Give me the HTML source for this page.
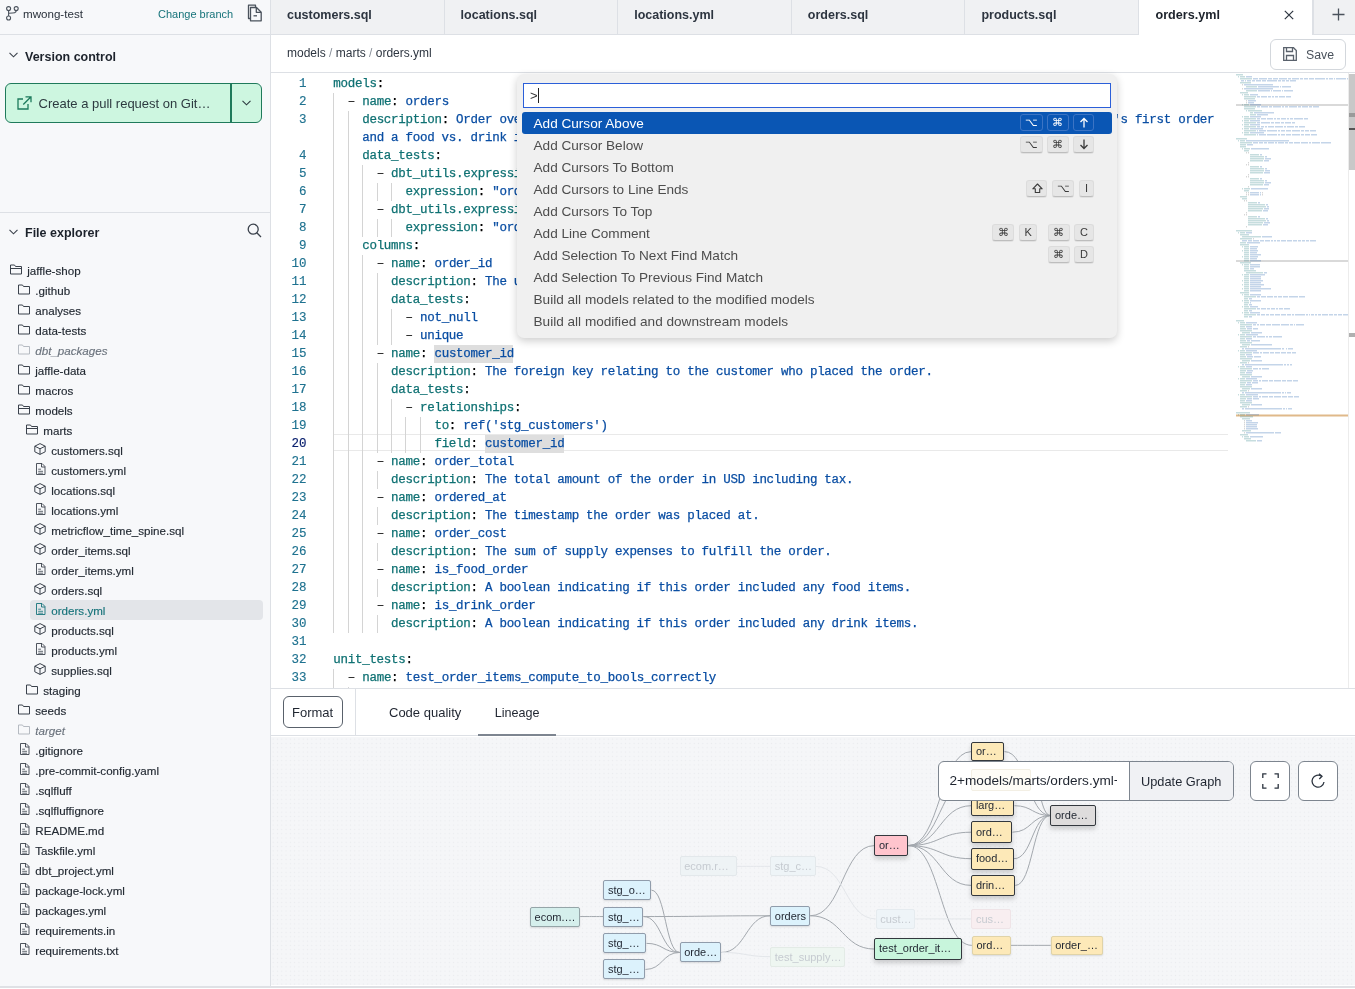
<!DOCTYPE html>
<html><head><meta charset="utf-8">
<style>
*{box-sizing:border-box;margin:0;padding:0}
body{will-change:transform}
html,body{width:1355px;height:989px;overflow:hidden;background:#fff;font-family:"Liberation Sans",sans-serif;color:#1f2530}
.abs{position:absolute}
#side{position:absolute;left:0;top:0;width:271px;height:989px;background:#f7f8fa;border-right:1px solid #dde0e5}
.hline{position:absolute;height:1px;background:#dde0e5}
.vline{position:absolute;width:1px;background:#dde0e5}
.t{position:absolute;white-space:nowrap;line-height:1.15}
.tr{-webkit-text-stroke:0.15px currentColor}
.tab{position:absolute;top:0;height:35px;background:#f0f1f3;border-right:1px solid #dde0e5;border-bottom:1px solid #dde0e5;font-weight:bold;font-size:12.5px;color:#2d3540}
.tab span{position:absolute;left:16px;top:8px}
.ln{-webkit-text-stroke:0.15px currentColor;position:absolute;width:36px;text-align:right;font-family:"Liberation Mono",monospace;font-size:12.5px;color:#1f7290;line-height:18px;height:18px}
.cl{-webkit-text-stroke:0.25px currentColor;position:absolute;font-family:"Liberation Mono",monospace;font-size:12.5px;letter-spacing:-0.28px;white-space:pre;color:#000;line-height:18px;height:18px}
.d{color:#222}.k{color:#0f7173}.v{color:#0a4ea3}
.g{position:absolute;width:1px;background:#d4d4d4}
.pi{position:absolute;font-size:13.6px;color:#4d4d4d;white-space:nowrap;line-height:22px}
.kb{position:absolute;height:17px;background:#e6e6e6;border:1px solid #dcdcdc;border-bottom-color:#bdbdbd;border-radius:3px;font-size:11px;color:#3a3a3a;text-align:center;line-height:15px;box-shadow:0 1px 0 rgba(0,0,0,.06)}
.sel .kb, .kbs{background:#0a56b4;border-color:#3c74c4;color:#fff;box-shadow:none}
.node{position:absolute;height:21px;border:1px solid #7d8793;border-radius:2px;font-size:11px;color:#1f2530;line-height:19px;padding-left:3.6px;white-space:nowrap;overflow:hidden;box-shadow:0 1px 2px rgba(0,0,0,.12)}
.dk{box-shadow:0 3px 5px rgba(0,0,0,.18)}
.fade{border-color:#e4e8ec;color:#c6cbd1;box-shadow:none}

</style></head>
<body>
<div id="side"></div>
<svg class="abs" style="left:5.5px;top:5.5px" width="13" height="15" viewBox="0 0 13 15" fill="none" stroke="#4a525c" stroke-width="1.1">
<circle cx="2.6" cy="2.6" r="2"/><circle cx="10.2" cy="2.6" r="2"/><circle cx="2.6" cy="12" r="2"/>
<path d="M2.6 4.6V10M10.2 4.6C10.2 7 8.5 7.2 2.8 7.3"/></svg>
<div class="t" style="left:23px;top:7px;font-size:11.6px;color:#2a313b">mwong-test</div>
<div class="t" style="left:158px;top:8px;font-size:11px;color:#16737a">Change branch</div>
<svg class="abs" style="left:246.5px;top:4px" width="16" height="18" viewBox="0 0 16 18" fill="none" stroke="#4a525c" stroke-width="1.3" stroke-linejoin="round">
<path d="M3.2 14.5H1.5V1.2H8.5V3"/><path d="M3.5 3.5H9.5L14.2 8.2V16.8H3.5Z"/><path d="M9.3 3.6V8.3H14"/><path d="M6.5 11.8H10"/></svg>
<div class="hline" style="left:0;top:34px;width:271px"></div>
<svg class="abs" style="left:9px;top:52px" width="9" height="6" viewBox="0 0 9 6" fill="none" stroke="#3b424c" stroke-width="1.1"><path d="M0.5 0.8L4.5 4.8L8.5 0.8"/></svg>
<div class="t" style="left:25px;top:49.5px;font-size:12.5px;font-weight:bold;color:#1c222b">Version control</div>
<div class="abs" style="left:5px;top:83px;width:257px;height:40px;background:#cdf6e0;border:1.5px solid #1f7a5b;border-radius:6px"></div>
<div class="abs" style="left:230px;top:84px;width:1.5px;height:38px;background:#1f7a5b"></div>
<svg class="abs" style="left:16.8px;top:95.8px" width="15" height="14" viewBox="0 0 15 14" fill="none" stroke="#1c7a5c" stroke-width="1.3">
<path d="M6 3H1V13H11V8"/><path d="M8.5 0.8H14V6.3M14 0.8L6.3 8.5"/></svg>
<div class="t" style="left:38.5px;top:97px;font-size:13px;color:#2d3a40">Create a pull request on Git…</div>
<svg class="abs" style="left:242px;top:100px" width="9" height="6" viewBox="0 0 9 6" fill="none" stroke="#2d3a40" stroke-width="1.1"><path d="M0.5 0.8L4.5 4.8L8.5 0.8"/></svg>
<div class="hline" style="left:0;top:212px;width:271px"></div>
<svg class="abs" style="left:9px;top:229px" width="9" height="6" viewBox="0 0 9 6" fill="none" stroke="#3b424c" stroke-width="1.1"><path d="M0.5 0.8L4.5 4.8L8.5 0.8"/></svg>
<div class="t" style="left:25px;top:225.7px;font-size:12.5px;font-weight:bold;color:#1c222b">File explorer</div>
<svg class="abs" style="left:247px;top:223px" width="15" height="15" viewBox="0 0 15 15" fill="none" stroke="#3b424c" stroke-width="1.3">
<circle cx="6.2" cy="6.2" r="5"/><path d="M9.8 9.8L14 14"/></svg>
<svg class="abs" style="left:10px;top:264px" width="12" height="11" viewBox="0 0 12 11" fill="none" stroke="#3b424c" stroke-width="1"><path d="M0.5 1V10H11.5V2.5H5.5L4.5 1Z"/><path d="M0.5 4.5H11.5"/></svg>
<div class="t tr" style="left:27.3px;top:263.7px;font-size:11.6px;color:#232a33;">jaffle-shop</div>
<svg class="abs" style="left:18px;top:284px" width="12" height="11" viewBox="0 0 12 11" fill="none" stroke="#3b424c" stroke-width="1"><path d="M0.5 1V10H11.5V2.5H5.5L4.5 1Z"/></svg>
<div class="t tr" style="left:35.3px;top:283.7px;font-size:11.6px;color:#232a33;">.github</div>
<svg class="abs" style="left:18px;top:304px" width="12" height="11" viewBox="0 0 12 11" fill="none" stroke="#3b424c" stroke-width="1"><path d="M0.5 1V10H11.5V2.5H5.5L4.5 1Z"/></svg>
<div class="t tr" style="left:35.3px;top:303.7px;font-size:11.6px;color:#232a33;">analyses</div>
<svg class="abs" style="left:18px;top:324px" width="12" height="11" viewBox="0 0 12 11" fill="none" stroke="#3b424c" stroke-width="1"><path d="M0.5 1V10H11.5V2.5H5.5L4.5 1Z"/></svg>
<div class="t tr" style="left:35.3px;top:323.7px;font-size:11.6px;color:#232a33;">data-tests</div>
<svg class="abs" style="left:18px;top:344px" width="12" height="11" viewBox="0 0 12 11" fill="none" stroke="#b5bac1" stroke-width="1"><path d="M0.5 1V10H11.5V2.5H5.5L4.5 1Z"/></svg>
<div class="t tr" style="left:35.3px;top:343.7px;font-size:11.6px;color:#6b737d;font-style:italic;">dbt_packages</div>
<svg class="abs" style="left:18px;top:364px" width="12" height="11" viewBox="0 0 12 11" fill="none" stroke="#3b424c" stroke-width="1"><path d="M0.5 1V10H11.5V2.5H5.5L4.5 1Z"/></svg>
<div class="t tr" style="left:35.3px;top:363.7px;font-size:11.6px;color:#232a33;">jaffle-data</div>
<svg class="abs" style="left:18px;top:384px" width="12" height="11" viewBox="0 0 12 11" fill="none" stroke="#3b424c" stroke-width="1"><path d="M0.5 1V10H11.5V2.5H5.5L4.5 1Z"/></svg>
<div class="t tr" style="left:35.3px;top:383.7px;font-size:11.6px;color:#232a33;">macros</div>
<svg class="abs" style="left:18px;top:404px" width="12" height="11" viewBox="0 0 12 11" fill="none" stroke="#3b424c" stroke-width="1"><path d="M0.5 1V10H11.5V2.5H5.5L4.5 1Z"/><path d="M0.5 4.5H11.5"/></svg>
<div class="t tr" style="left:35.3px;top:403.7px;font-size:11.6px;color:#232a33;">models</div>
<svg class="abs" style="left:26px;top:424px" width="12" height="11" viewBox="0 0 12 11" fill="none" stroke="#3b424c" stroke-width="1"><path d="M0.5 1V10H11.5V2.5H5.5L4.5 1Z"/><path d="M0.5 4.5H11.5"/></svg>
<div class="t tr" style="left:43.3px;top:423.7px;font-size:11.6px;color:#232a33;">marts</div>
<svg class="abs" style="left:34px;top:443px" width="12" height="12" viewBox="0 0 12 12" fill="none" stroke="#3b424c" stroke-width="1"><path d="M6 0.6L11.2 3.2V8.8L6 11.4L0.8 8.8V3.2Z"/><path d="M0.8 3.2L6 5.8L11.2 3.2M6 5.8V11.4"/></svg>
<div class="t tr" style="left:51.3px;top:443.7px;font-size:11.6px;color:#232a33;">customers.sql</div>
<svg class="abs" style="left:35.5px;top:463px" width="10" height="12" viewBox="0 0 10 12" fill="none" stroke="#3b424c" stroke-width="0.9"><path d="M0.5 0.5H6L9 3.5V11.5H0.5Z"/><path d="M5.5 0.5V4H9"/><path d="M2.2 6.2H5M2.2 8.3H7M2.2 10.2H7" stroke-width="0.8"/></svg>
<div class="t tr" style="left:51.3px;top:463.7px;font-size:11.6px;color:#232a33;">customers.yml</div>
<svg class="abs" style="left:34px;top:483px" width="12" height="12" viewBox="0 0 12 12" fill="none" stroke="#3b424c" stroke-width="1"><path d="M6 0.6L11.2 3.2V8.8L6 11.4L0.8 8.8V3.2Z"/><path d="M0.8 3.2L6 5.8L11.2 3.2M6 5.8V11.4"/></svg>
<div class="t tr" style="left:51.3px;top:483.7px;font-size:11.6px;color:#232a33;">locations.sql</div>
<svg class="abs" style="left:35.5px;top:503px" width="10" height="12" viewBox="0 0 10 12" fill="none" stroke="#3b424c" stroke-width="0.9"><path d="M0.5 0.5H6L9 3.5V11.5H0.5Z"/><path d="M5.5 0.5V4H9"/><path d="M2.2 6.2H5M2.2 8.3H7M2.2 10.2H7" stroke-width="0.8"/></svg>
<div class="t tr" style="left:51.3px;top:503.7px;font-size:11.6px;color:#232a33;">locations.yml</div>
<svg class="abs" style="left:34px;top:523px" width="12" height="12" viewBox="0 0 12 12" fill="none" stroke="#3b424c" stroke-width="1"><path d="M6 0.6L11.2 3.2V8.8L6 11.4L0.8 8.8V3.2Z"/><path d="M0.8 3.2L6 5.8L11.2 3.2M6 5.8V11.4"/></svg>
<div class="t tr" style="left:51.3px;top:523.7px;font-size:11.6px;color:#232a33;">metricflow_time_spine.sql</div>
<svg class="abs" style="left:34px;top:543px" width="12" height="12" viewBox="0 0 12 12" fill="none" stroke="#3b424c" stroke-width="1"><path d="M6 0.6L11.2 3.2V8.8L6 11.4L0.8 8.8V3.2Z"/><path d="M0.8 3.2L6 5.8L11.2 3.2M6 5.8V11.4"/></svg>
<div class="t tr" style="left:51.3px;top:543.7px;font-size:11.6px;color:#232a33;">order_items.sql</div>
<svg class="abs" style="left:35.5px;top:563px" width="10" height="12" viewBox="0 0 10 12" fill="none" stroke="#3b424c" stroke-width="0.9"><path d="M0.5 0.5H6L9 3.5V11.5H0.5Z"/><path d="M5.5 0.5V4H9"/><path d="M2.2 6.2H5M2.2 8.3H7M2.2 10.2H7" stroke-width="0.8"/></svg>
<div class="t tr" style="left:51.3px;top:563.7px;font-size:11.6px;color:#232a33;">order_items.yml</div>
<svg class="abs" style="left:34px;top:583px" width="12" height="12" viewBox="0 0 12 12" fill="none" stroke="#3b424c" stroke-width="1"><path d="M6 0.6L11.2 3.2V8.8L6 11.4L0.8 8.8V3.2Z"/><path d="M0.8 3.2L6 5.8L11.2 3.2M6 5.8V11.4"/></svg>
<div class="t tr" style="left:51.3px;top:583.7px;font-size:11.6px;color:#232a33;">orders.sql</div>
<div class="abs" style="left:29.5px;top:600px;width:233px;height:20px;background:#e3e5e9;border-radius:4px"></div>
<svg class="abs" style="left:35.5px;top:603px" width="10" height="12" viewBox="0 0 10 12" fill="none" stroke="#16737a" stroke-width="0.9"><path d="M0.5 0.5H6L9 3.5V11.5H0.5Z"/><path d="M5.5 0.5V4H9"/><path d="M2.2 6.2H5M2.2 8.3H7M2.2 10.2H7" stroke-width="0.8"/></svg>
<div class="t tr" style="left:51.3px;top:603.7px;font-size:11.6px;color:#16737a;">orders.yml</div>
<svg class="abs" style="left:34px;top:623px" width="12" height="12" viewBox="0 0 12 12" fill="none" stroke="#3b424c" stroke-width="1"><path d="M6 0.6L11.2 3.2V8.8L6 11.4L0.8 8.8V3.2Z"/><path d="M0.8 3.2L6 5.8L11.2 3.2M6 5.8V11.4"/></svg>
<div class="t tr" style="left:51.3px;top:623.7px;font-size:11.6px;color:#232a33;">products.sql</div>
<svg class="abs" style="left:35.5px;top:643px" width="10" height="12" viewBox="0 0 10 12" fill="none" stroke="#3b424c" stroke-width="0.9"><path d="M0.5 0.5H6L9 3.5V11.5H0.5Z"/><path d="M5.5 0.5V4H9"/><path d="M2.2 6.2H5M2.2 8.3H7M2.2 10.2H7" stroke-width="0.8"/></svg>
<div class="t tr" style="left:51.3px;top:643.7px;font-size:11.6px;color:#232a33;">products.yml</div>
<svg class="abs" style="left:34px;top:663px" width="12" height="12" viewBox="0 0 12 12" fill="none" stroke="#3b424c" stroke-width="1"><path d="M6 0.6L11.2 3.2V8.8L6 11.4L0.8 8.8V3.2Z"/><path d="M0.8 3.2L6 5.8L11.2 3.2M6 5.8V11.4"/></svg>
<div class="t tr" style="left:51.3px;top:663.7px;font-size:11.6px;color:#232a33;">supplies.sql</div>
<svg class="abs" style="left:26px;top:684px" width="12" height="11" viewBox="0 0 12 11" fill="none" stroke="#3b424c" stroke-width="1"><path d="M0.5 1V10H11.5V2.5H5.5L4.5 1Z"/></svg>
<div class="t tr" style="left:43.3px;top:683.7px;font-size:11.6px;color:#232a33;">staging</div>
<svg class="abs" style="left:18px;top:704px" width="12" height="11" viewBox="0 0 12 11" fill="none" stroke="#3b424c" stroke-width="1"><path d="M0.5 1V10H11.5V2.5H5.5L4.5 1Z"/></svg>
<div class="t tr" style="left:35.3px;top:703.7px;font-size:11.6px;color:#232a33;">seeds</div>
<svg class="abs" style="left:18px;top:724px" width="12" height="11" viewBox="0 0 12 11" fill="none" stroke="#b5bac1" stroke-width="1"><path d="M0.5 1V10H11.5V2.5H5.5L4.5 1Z"/></svg>
<div class="t tr" style="left:35.3px;top:723.7px;font-size:11.6px;color:#6b737d;font-style:italic;">target</div>
<svg class="abs" style="left:19.5px;top:743px" width="10" height="12" viewBox="0 0 10 12" fill="none" stroke="#3b424c" stroke-width="0.9"><path d="M0.5 0.5H6L9 3.5V11.5H0.5Z"/><path d="M5.5 0.5V4H9"/><path d="M2.2 6.2H5M2.2 8.3H7M2.2 10.2H7" stroke-width="0.8"/></svg>
<div class="t tr" style="left:35.3px;top:743.7px;font-size:11.6px;color:#232a33;">.gitignore</div>
<svg class="abs" style="left:19.5px;top:763px" width="10" height="12" viewBox="0 0 10 12" fill="none" stroke="#3b424c" stroke-width="0.9"><path d="M0.5 0.5H6L9 3.5V11.5H0.5Z"/><path d="M5.5 0.5V4H9"/><path d="M2.2 6.2H5M2.2 8.3H7M2.2 10.2H7" stroke-width="0.8"/></svg>
<div class="t tr" style="left:35.3px;top:763.7px;font-size:11.6px;color:#232a33;">.pre-commit-config.yaml</div>
<svg class="abs" style="left:19.5px;top:783px" width="10" height="12" viewBox="0 0 10 12" fill="none" stroke="#3b424c" stroke-width="0.9"><path d="M0.5 0.5H6L9 3.5V11.5H0.5Z"/><path d="M5.5 0.5V4H9"/><path d="M2.2 6.2H5M2.2 8.3H7M2.2 10.2H7" stroke-width="0.8"/></svg>
<div class="t tr" style="left:35.3px;top:783.7px;font-size:11.6px;color:#232a33;">.sqlfluff</div>
<svg class="abs" style="left:19.5px;top:803px" width="10" height="12" viewBox="0 0 10 12" fill="none" stroke="#3b424c" stroke-width="0.9"><path d="M0.5 0.5H6L9 3.5V11.5H0.5Z"/><path d="M5.5 0.5V4H9"/><path d="M2.2 6.2H5M2.2 8.3H7M2.2 10.2H7" stroke-width="0.8"/></svg>
<div class="t tr" style="left:35.3px;top:803.7px;font-size:11.6px;color:#232a33;">.sqlfluffignore</div>
<svg class="abs" style="left:19.5px;top:823px" width="10" height="12" viewBox="0 0 10 12" fill="none" stroke="#3b424c" stroke-width="0.9"><path d="M0.5 0.5H6L9 3.5V11.5H0.5Z"/><path d="M5.5 0.5V4H9"/><path d="M2.2 6.2H5M2.2 8.3H7M2.2 10.2H7" stroke-width="0.8"/></svg>
<div class="t tr" style="left:35.3px;top:823.7px;font-size:11.6px;color:#232a33;">README.md</div>
<svg class="abs" style="left:19.5px;top:843px" width="10" height="12" viewBox="0 0 10 12" fill="none" stroke="#3b424c" stroke-width="0.9"><path d="M0.5 0.5H6L9 3.5V11.5H0.5Z"/><path d="M5.5 0.5V4H9"/><path d="M2.2 6.2H5M2.2 8.3H7M2.2 10.2H7" stroke-width="0.8"/></svg>
<div class="t tr" style="left:35.3px;top:843.7px;font-size:11.6px;color:#232a33;">Taskfile.yml</div>
<svg class="abs" style="left:19.5px;top:863px" width="10" height="12" viewBox="0 0 10 12" fill="none" stroke="#3b424c" stroke-width="0.9"><path d="M0.5 0.5H6L9 3.5V11.5H0.5Z"/><path d="M5.5 0.5V4H9"/><path d="M2.2 6.2H5M2.2 8.3H7M2.2 10.2H7" stroke-width="0.8"/></svg>
<div class="t tr" style="left:35.3px;top:863.7px;font-size:11.6px;color:#232a33;">dbt_project.yml</div>
<svg class="abs" style="left:19.5px;top:883px" width="10" height="12" viewBox="0 0 10 12" fill="none" stroke="#3b424c" stroke-width="0.9"><path d="M0.5 0.5H6L9 3.5V11.5H0.5Z"/><path d="M5.5 0.5V4H9"/><path d="M2.2 6.2H5M2.2 8.3H7M2.2 10.2H7" stroke-width="0.8"/></svg>
<div class="t tr" style="left:35.3px;top:883.7px;font-size:11.6px;color:#232a33;">package-lock.yml</div>
<svg class="abs" style="left:19.5px;top:903px" width="10" height="12" viewBox="0 0 10 12" fill="none" stroke="#3b424c" stroke-width="0.9"><path d="M0.5 0.5H6L9 3.5V11.5H0.5Z"/><path d="M5.5 0.5V4H9"/><path d="M2.2 6.2H5M2.2 8.3H7M2.2 10.2H7" stroke-width="0.8"/></svg>
<div class="t tr" style="left:35.3px;top:903.7px;font-size:11.6px;color:#232a33;">packages.yml</div>
<svg class="abs" style="left:19.5px;top:923px" width="10" height="12" viewBox="0 0 10 12" fill="none" stroke="#3b424c" stroke-width="0.9"><path d="M0.5 0.5H6L9 3.5V11.5H0.5Z"/><path d="M5.5 0.5V4H9"/><path d="M2.2 6.2H5M2.2 8.3H7M2.2 10.2H7" stroke-width="0.8"/></svg>
<div class="t tr" style="left:35.3px;top:923.7px;font-size:11.6px;color:#232a33;">requirements.in</div>
<svg class="abs" style="left:19.5px;top:943px" width="10" height="12" viewBox="0 0 10 12" fill="none" stroke="#3b424c" stroke-width="0.9"><path d="M0.5 0.5H6L9 3.5V11.5H0.5Z"/><path d="M5.5 0.5V4H9"/><path d="M2.2 6.2H5M2.2 8.3H7M2.2 10.2H7" stroke-width="0.8"/></svg>
<div class="t tr" style="left:35.3px;top:943.7px;font-size:11.6px;color:#232a33;">requirements.txt</div>
<div class="abs" style="left:0;top:985.5px;width:1355px;height:3.5px;background:#fff;border-top:2px solid #dfe1e5"></div>
<div class="tab" style="left:271.0px;width:173.6px"><span>customers.sql</span></div>
<div class="tab" style="left:444.6px;width:173.6px"><span>locations.sql</span></div>
<div class="tab" style="left:618.2px;width:173.6px"><span>locations.yml</span></div>
<div class="tab" style="left:791.8px;width:173.6px"><span>orders.sql</span></div>
<div class="tab" style="left:965.4px;width:173.6px"><span>products.sql</span></div>
<div class="abs" style="left:1139px;top:0;width:174px;height:35px;background:#fff;border-right:1px solid #dde0e5"></div>
<div class="t" style="left:1155.5px;top:8px;font-size:12.6px;font-weight:bold;color:#1c222b">orders.yml</div>
<svg class="abs" style="left:1284px;top:9.5px" width="10" height="10" viewBox="0 0 10 10" fill="none" stroke="#2d3540" stroke-width="1.2"><path d="M0.8 0.8L9.2 9.2M9.2 0.8L0.8 9.2"/></svg>
<div class="abs" style="left:1313px;top:0;width:42px;height:35px;background:#f0f1f3;border-bottom:1px solid #dde0e5;border-left:1px solid #dde0e5"></div>
<svg class="abs" style="left:1332px;top:8px" width="13" height="13" viewBox="0 0 13 13" fill="none" stroke="#4a525c" stroke-width="1.3"><path d="M6.5 0.5V12.5M0.5 6.5H12.5"/></svg>
<div class="abs" style="left:271px;top:35px;width:1084px;height:38px;background:#fff;border-bottom:1px solid #dde0e5"></div>
<div class="t" style="left:287px;top:47px;font-size:12px;color:#2d3540">models <span style="color:#8a919a">/</span> marts <span style="color:#8a919a">/</span> orders.yml</div>
<div class="abs" style="left:1270px;top:38.5px;width:76px;height:31px;border:1px solid #d3d7dc;border-radius:6px;background:#fff"></div>
<svg class="abs" style="left:1283px;top:47px" width="14" height="14" viewBox="0 0 14 14" fill="none" stroke="#5a626c" stroke-width="1.3"><path d="M0.7 0.7H10.5L13.3 3.5V13.3H0.7Z"/><path d="M3.5 0.7V4.5H9.5V0.7"/><path d="M3.5 13.3V8.5H10.5V13.3"/></svg>
<div class="t" style="left:1306px;top:48px;font-size:12.3px;color:#4a525c">Save</div>
<div class="abs" style="left:271px;top:73px;width:1084px;height:615px;background:#fff"></div>
<div class="abs" style="left:333px;top:434.0px;width:895px;height:17px;border-top:1.5px solid #e9e9e9;border-bottom:1.5px solid #e9e9e9"></div>
<div class="abs" style="left:434.1px;top:344.5px;width:79.2px;height:18px;background:#dedede"></div>
<div class="abs" style="left:484.5px;top:434.5px;width:79.2px;height:18px;background:#dedede"></div>
<div class="ln" style="left:270.5px;top:74.5px;">1</div>
<div class="cl" style="left:333.3px;top:74.5px"><span class="k">models</span>:</div>
<div class="ln" style="left:270.5px;top:92.5px;">2</div>
<div class="g" style="left:333.3px;top:92.5px;height:18px"></div>
<div class="cl" style="left:333.3px;top:92.5px">  <span class="d">–</span> <span class="k">name</span>:<span class="v"> orders</span></div>
<div class="ln" style="left:270.5px;top:110.5px;">3</div>
<div class="g" style="left:333.3px;top:110.5px;height:18px"></div>
<div class="g" style="left:347.7px;top:110.5px;height:18px"></div>
<div class="cl" style="left:333.3px;top:110.5px">    <span class="k">description</span>:<span class="v"> Order overview data mart, offering key details for each order inlcluding if it&#x27;s a customer&#x27;s first order </span></div>
<div class="g" style="left:333.3px;top:128.5px;height:18px"></div>
<div class="g" style="left:347.7px;top:128.5px;height:18px"></div>
<div class="cl" style="left:333.3px;top:128.5px">    <span class="v">and a food vs. drink item breakdown. One row per order.</span></div>
<div class="ln" style="left:270.5px;top:146.5px;">4</div>
<div class="g" style="left:333.3px;top:146.5px;height:18px"></div>
<div class="g" style="left:347.7px;top:146.5px;height:18px"></div>
<div class="cl" style="left:333.3px;top:146.5px">    <span class="k">data_tests</span>:</div>
<div class="ln" style="left:270.5px;top:164.5px;">5</div>
<div class="g" style="left:333.3px;top:164.5px;height:18px"></div>
<div class="g" style="left:347.7px;top:164.5px;height:18px"></div>
<div class="g" style="left:362.1px;top:164.5px;height:18px"></div>
<div class="cl" style="left:333.3px;top:164.5px">      <span class="d">–</span> <span class="k">dbt_utils.expression_is_true</span>:</div>
<div class="ln" style="left:270.5px;top:182.5px;">6</div>
<div class="g" style="left:333.3px;top:182.5px;height:18px"></div>
<div class="g" style="left:347.7px;top:182.5px;height:18px"></div>
<div class="g" style="left:362.1px;top:182.5px;height:18px"></div>
<div class="g" style="left:376.5px;top:182.5px;height:18px"></div>
<div class="g" style="left:390.9px;top:182.5px;height:18px"></div>
<div class="cl" style="left:333.3px;top:182.5px">          <span class="k">expression</span>:<span class="v"> &quot;order_total - tax_paid = subtotal&quot;</span></div>
<div class="ln" style="left:270.5px;top:200.5px;">7</div>
<div class="g" style="left:333.3px;top:200.5px;height:18px"></div>
<div class="g" style="left:347.7px;top:200.5px;height:18px"></div>
<div class="g" style="left:362.1px;top:200.5px;height:18px"></div>
<div class="cl" style="left:333.3px;top:200.5px">      <span class="d">–</span> <span class="k">dbt_utils.expression_is_true</span>:</div>
<div class="ln" style="left:270.5px;top:218.5px;">8</div>
<div class="g" style="left:333.3px;top:218.5px;height:18px"></div>
<div class="g" style="left:347.7px;top:218.5px;height:18px"></div>
<div class="g" style="left:362.1px;top:218.5px;height:18px"></div>
<div class="g" style="left:376.5px;top:218.5px;height:18px"></div>
<div class="g" style="left:390.9px;top:218.5px;height:18px"></div>
<div class="cl" style="left:333.3px;top:218.5px">          <span class="k">expression</span>:<span class="v"> &quot;order_items_subtotal = subtotal&quot;</span></div>
<div class="ln" style="left:270.5px;top:236.5px;">9</div>
<div class="g" style="left:333.3px;top:236.5px;height:18px"></div>
<div class="g" style="left:347.7px;top:236.5px;height:18px"></div>
<div class="cl" style="left:333.3px;top:236.5px">    <span class="k">columns</span>:</div>
<div class="ln" style="left:270.5px;top:254.5px;">10</div>
<div class="g" style="left:333.3px;top:254.5px;height:18px"></div>
<div class="g" style="left:347.7px;top:254.5px;height:18px"></div>
<div class="g" style="left:362.1px;top:254.5px;height:18px"></div>
<div class="cl" style="left:333.3px;top:254.5px">      <span class="d">–</span> <span class="k">name</span>:<span class="v"> order_id</span></div>
<div class="ln" style="left:270.5px;top:272.5px;">11</div>
<div class="g" style="left:333.3px;top:272.5px;height:18px"></div>
<div class="g" style="left:347.7px;top:272.5px;height:18px"></div>
<div class="g" style="left:362.1px;top:272.5px;height:18px"></div>
<div class="g" style="left:376.5px;top:272.5px;height:18px"></div>
<div class="cl" style="left:333.3px;top:272.5px">        <span class="k">description</span>:<span class="v"> The unique key of the orders mart.</span></div>
<div class="ln" style="left:270.5px;top:290.5px;">12</div>
<div class="g" style="left:333.3px;top:290.5px;height:18px"></div>
<div class="g" style="left:347.7px;top:290.5px;height:18px"></div>
<div class="g" style="left:362.1px;top:290.5px;height:18px"></div>
<div class="g" style="left:376.5px;top:290.5px;height:18px"></div>
<div class="cl" style="left:333.3px;top:290.5px">        <span class="k">data_tests</span>:</div>
<div class="ln" style="left:270.5px;top:308.5px;">13</div>
<div class="g" style="left:333.3px;top:308.5px;height:18px"></div>
<div class="g" style="left:347.7px;top:308.5px;height:18px"></div>
<div class="g" style="left:362.1px;top:308.5px;height:18px"></div>
<div class="g" style="left:376.5px;top:308.5px;height:18px"></div>
<div class="g" style="left:390.9px;top:308.5px;height:18px"></div>
<div class="cl" style="left:333.3px;top:308.5px">          <span class="d">–</span> <span class="v">not_null</span></div>
<div class="ln" style="left:270.5px;top:326.5px;">14</div>
<div class="g" style="left:333.3px;top:326.5px;height:18px"></div>
<div class="g" style="left:347.7px;top:326.5px;height:18px"></div>
<div class="g" style="left:362.1px;top:326.5px;height:18px"></div>
<div class="g" style="left:376.5px;top:326.5px;height:18px"></div>
<div class="g" style="left:390.9px;top:326.5px;height:18px"></div>
<div class="cl" style="left:333.3px;top:326.5px">          <span class="d">–</span> <span class="v">unique</span></div>
<div class="ln" style="left:270.5px;top:344.5px;">15</div>
<div class="g" style="left:333.3px;top:344.5px;height:18px"></div>
<div class="g" style="left:347.7px;top:344.5px;height:18px"></div>
<div class="g" style="left:362.1px;top:344.5px;height:18px"></div>
<div class="cl" style="left:333.3px;top:344.5px">      <span class="d">–</span> <span class="k">name</span>:<span class="v"> customer_id</span></div>
<div class="ln" style="left:270.5px;top:362.5px;">16</div>
<div class="g" style="left:333.3px;top:362.5px;height:18px"></div>
<div class="g" style="left:347.7px;top:362.5px;height:18px"></div>
<div class="g" style="left:362.1px;top:362.5px;height:18px"></div>
<div class="g" style="left:376.5px;top:362.5px;height:18px"></div>
<div class="cl" style="left:333.3px;top:362.5px">        <span class="k">description</span>:<span class="v"> The foreign key relating to the customer who placed the order.</span></div>
<div class="ln" style="left:270.5px;top:380.5px;">17</div>
<div class="g" style="left:333.3px;top:380.5px;height:18px"></div>
<div class="g" style="left:347.7px;top:380.5px;height:18px"></div>
<div class="g" style="left:362.1px;top:380.5px;height:18px"></div>
<div class="g" style="left:376.5px;top:380.5px;height:18px"></div>
<div class="cl" style="left:333.3px;top:380.5px">        <span class="k">data_tests</span>:</div>
<div class="ln" style="left:270.5px;top:398.5px;">18</div>
<div class="g" style="left:333.3px;top:398.5px;height:18px"></div>
<div class="g" style="left:347.7px;top:398.5px;height:18px"></div>
<div class="g" style="left:362.1px;top:398.5px;height:18px"></div>
<div class="g" style="left:376.5px;top:398.5px;height:18px"></div>
<div class="g" style="left:390.9px;top:398.5px;height:18px"></div>
<div class="cl" style="left:333.3px;top:398.5px">          <span class="d">–</span> <span class="k">relationships</span>:</div>
<div class="ln" style="left:270.5px;top:416.5px;">19</div>
<div class="g" style="left:333.3px;top:416.5px;height:18px"></div>
<div class="g" style="left:347.7px;top:416.5px;height:18px"></div>
<div class="g" style="left:362.1px;top:416.5px;height:18px"></div>
<div class="g" style="left:376.5px;top:416.5px;height:18px"></div>
<div class="g" style="left:390.9px;top:416.5px;height:18px"></div>
<div class="g" style="left:405.3px;top:416.5px;height:18px"></div>
<div class="g" style="left:419.7px;top:416.5px;height:18px"></div>
<div class="cl" style="left:333.3px;top:416.5px">              <span class="k">to</span>:<span class="v"> ref(&#x27;stg_customers&#x27;)</span></div>
<div class="ln" style="left:270.5px;top:434.5px;color:#0b216f">20</div>
<div class="g" style="left:333.3px;top:434.5px;height:18px"></div>
<div class="g" style="left:347.7px;top:434.5px;height:18px"></div>
<div class="g" style="left:362.1px;top:434.5px;height:18px"></div>
<div class="g" style="left:376.5px;top:434.5px;height:18px"></div>
<div class="g" style="left:390.9px;top:434.5px;height:18px"></div>
<div class="g" style="left:405.3px;top:434.5px;height:18px"></div>
<div class="g" style="left:419.7px;top:434.5px;height:18px"></div>
<div class="cl" style="left:333.3px;top:434.5px">              <span class="k">field</span>:<span class="v"> customer_id</span></div>
<div class="ln" style="left:270.5px;top:452.5px;">21</div>
<div class="g" style="left:333.3px;top:452.5px;height:18px"></div>
<div class="g" style="left:347.7px;top:452.5px;height:18px"></div>
<div class="g" style="left:362.1px;top:452.5px;height:18px"></div>
<div class="cl" style="left:333.3px;top:452.5px">      <span class="d">–</span> <span class="k">name</span>:<span class="v"> order_total</span></div>
<div class="ln" style="left:270.5px;top:470.5px;">22</div>
<div class="g" style="left:333.3px;top:470.5px;height:18px"></div>
<div class="g" style="left:347.7px;top:470.5px;height:18px"></div>
<div class="g" style="left:362.1px;top:470.5px;height:18px"></div>
<div class="g" style="left:376.5px;top:470.5px;height:18px"></div>
<div class="cl" style="left:333.3px;top:470.5px">        <span class="k">description</span>:<span class="v"> The total amount of the order in USD including tax.</span></div>
<div class="ln" style="left:270.5px;top:488.5px;">23</div>
<div class="g" style="left:333.3px;top:488.5px;height:18px"></div>
<div class="g" style="left:347.7px;top:488.5px;height:18px"></div>
<div class="g" style="left:362.1px;top:488.5px;height:18px"></div>
<div class="cl" style="left:333.3px;top:488.5px">      <span class="d">–</span> <span class="k">name</span>:<span class="v"> ordered_at</span></div>
<div class="ln" style="left:270.5px;top:506.5px;">24</div>
<div class="g" style="left:333.3px;top:506.5px;height:18px"></div>
<div class="g" style="left:347.7px;top:506.5px;height:18px"></div>
<div class="g" style="left:362.1px;top:506.5px;height:18px"></div>
<div class="g" style="left:376.5px;top:506.5px;height:18px"></div>
<div class="cl" style="left:333.3px;top:506.5px">        <span class="k">description</span>:<span class="v"> The timestamp the order was placed at.</span></div>
<div class="ln" style="left:270.5px;top:524.5px;">25</div>
<div class="g" style="left:333.3px;top:524.5px;height:18px"></div>
<div class="g" style="left:347.7px;top:524.5px;height:18px"></div>
<div class="g" style="left:362.1px;top:524.5px;height:18px"></div>
<div class="cl" style="left:333.3px;top:524.5px">      <span class="d">–</span> <span class="k">name</span>:<span class="v"> order_cost</span></div>
<div class="ln" style="left:270.5px;top:542.5px;">26</div>
<div class="g" style="left:333.3px;top:542.5px;height:18px"></div>
<div class="g" style="left:347.7px;top:542.5px;height:18px"></div>
<div class="g" style="left:362.1px;top:542.5px;height:18px"></div>
<div class="g" style="left:376.5px;top:542.5px;height:18px"></div>
<div class="cl" style="left:333.3px;top:542.5px">        <span class="k">description</span>:<span class="v"> The sum of supply expenses to fulfill the order.</span></div>
<div class="ln" style="left:270.5px;top:560.5px;">27</div>
<div class="g" style="left:333.3px;top:560.5px;height:18px"></div>
<div class="g" style="left:347.7px;top:560.5px;height:18px"></div>
<div class="g" style="left:362.1px;top:560.5px;height:18px"></div>
<div class="cl" style="left:333.3px;top:560.5px">      <span class="d">–</span> <span class="k">name</span>:<span class="v"> is_food_order</span></div>
<div class="ln" style="left:270.5px;top:578.5px;">28</div>
<div class="g" style="left:333.3px;top:578.5px;height:18px"></div>
<div class="g" style="left:347.7px;top:578.5px;height:18px"></div>
<div class="g" style="left:362.1px;top:578.5px;height:18px"></div>
<div class="g" style="left:376.5px;top:578.5px;height:18px"></div>
<div class="cl" style="left:333.3px;top:578.5px">        <span class="k">description</span>:<span class="v"> A boolean indicating if this order included any food items.</span></div>
<div class="ln" style="left:270.5px;top:596.5px;">29</div>
<div class="g" style="left:333.3px;top:596.5px;height:18px"></div>
<div class="g" style="left:347.7px;top:596.5px;height:18px"></div>
<div class="g" style="left:362.1px;top:596.5px;height:18px"></div>
<div class="cl" style="left:333.3px;top:596.5px">      <span class="d">–</span> <span class="k">name</span>:<span class="v"> is_drink_order</span></div>
<div class="ln" style="left:270.5px;top:614.5px;">30</div>
<div class="g" style="left:333.3px;top:614.5px;height:18px"></div>
<div class="g" style="left:347.7px;top:614.5px;height:18px"></div>
<div class="g" style="left:362.1px;top:614.5px;height:18px"></div>
<div class="g" style="left:376.5px;top:614.5px;height:18px"></div>
<div class="cl" style="left:333.3px;top:614.5px">        <span class="k">description</span>:<span class="v"> A boolean indicating if this order included any drink items.</span></div>
<div class="ln" style="left:270.5px;top:632.5px;">31</div>
<div class="cl" style="left:333.3px;top:632.5px"><span class="v"></span></div>
<div class="ln" style="left:270.5px;top:650.5px;">32</div>
<div class="cl" style="left:333.3px;top:650.5px"><span class="k">unit_tests</span>:</div>
<div class="ln" style="left:270.5px;top:668.5px;">33</div>
<div class="g" style="left:333.3px;top:668.5px;height:18px"></div>
<div class="cl" style="left:333.3px;top:668.5px">  <span class="d">–</span> <span class="k">name</span>:<span class="v"> test_order_items_compute_to_bools_correctly</span></div>
<div class="ln" style="left:270.5px;top:686.5px;">34</div>
<div class="g" style="left:333.3px;top:686.5px;height:18px"></div>
<div class="g" style="left:347.7px;top:686.5px;height:18px"></div>
<div class="cl" style="left:333.3px;top:686.5px">    <span class="k">description</span>:<span class="v"> &quot;Test that the counts of drinks and food orders convert to booleans properly.&quot;</span></div>
<svg class="abs" style="left:0;top:0" width="1355" height="989">
<rect x="1236" y="104" width="112" height="2" fill="#d9d9d9"/>
<rect x="1236" y="260" width="112" height="2" fill="#d9d9d9"/>
<rect x="1236" y="414.5" width="112" height="2" fill="#e0b98a"/>
<path fill="#0f7173" opacity="0.24" d="M1236 74h7v1.5h-7zM1238 76h1v1.5h-1zM1240 76h5v1.5h-5zM1240 78h12v1.5h-12zM1240 82h11v1.5h-11zM1246 86h11v1.5h-11zM1246 90h11v1.5h-11zM1240 92h8v1.5h-8zM1242 94h1v1.5h-1zM1244 94h5v1.5h-5zM1244 96h12v1.5h-12zM1244 98h11v1.5h-11zM1242 104h1v1.5h-1zM1244 104h5v1.5h-5zM1244 106h12v1.5h-12zM1244 108h11v1.5h-11zM1246 110h1v1.5h-1zM1248 110h14v1.5h-14zM1250 112h3v1.5h-3zM1250 114h6v1.5h-6zM1242 116h1v1.5h-1zM1244 116h5v1.5h-5zM1244 118h12v1.5h-12zM1242 120h1v1.5h-1zM1244 120h5v1.5h-5zM1244 122h12v1.5h-12zM1242 124h1v1.5h-1zM1244 124h5v1.5h-5zM1244 126h12v1.5h-12zM1242 128h1v1.5h-1zM1244 128h5v1.5h-5zM1244 130h12v1.5h-12zM1242 132h1v1.5h-1zM1244 132h5v1.5h-5zM1244 134h12v1.5h-12zM1236 138h11v1.5h-11zM1238 140h1v1.5h-1zM1240 140h5v1.5h-5zM1240 142h12v1.5h-12zM1240 144h6v1.5h-6zM1240 146h6v1.5h-6zM1242 148h1v1.5h-1zM1244 148h6v1.5h-6zM1244 150h5v1.5h-5zM1250 154h9v1.5h-9zM1250 156h14v1.5h-14zM1250 158h14v1.5h-14zM1250 160h13v1.5h-13zM1250 166h9v1.5h-9zM1250 168h14v1.5h-14zM1250 170h14v1.5h-14zM1250 172h13v1.5h-13zM1250 178h9v1.5h-9zM1250 180h14v1.5h-14zM1250 182h14v1.5h-14zM1250 184h13v1.5h-13zM1242 188h1v1.5h-1zM1244 188h6v1.5h-6zM1244 190h5v1.5h-5zM1240 196h7v1.5h-7zM1242 198h5v1.5h-5zM1248 202h9v1.5h-9zM1248 204h17v1.5h-17zM1248 206h18v1.5h-18zM1248 208h15v1.5h-15zM1248 210h14v1.5h-14zM1248 216h9v1.5h-9zM1248 218h17v1.5h-17zM1248 220h18v1.5h-18zM1248 222h15v1.5h-15zM1248 224h14v1.5h-14zM1236 230h16v1.5h-16zM1238 232h1v1.5h-1zM1240 232h5v1.5h-5zM1240 234h9v1.5h-9zM1242 236h19v1.5h-19zM1240 238h12v1.5h-12zM1240 242h6v1.5h-6zM1240 244h9v1.5h-9zM1242 246h1v1.5h-1zM1244 246h5v1.5h-5zM1244 248h5v1.5h-5zM1242 250h1v1.5h-1zM1244 250h5v1.5h-5zM1244 252h5v1.5h-5zM1244 254h5v1.5h-5zM1242 256h1v1.5h-1zM1244 256h5v1.5h-5zM1244 258h5v1.5h-5zM1244 260h5v1.5h-5zM1240 262h11v1.5h-11zM1242 264h1v1.5h-1zM1244 264h5v1.5h-5zM1244 266h5v1.5h-5zM1244 268h5v1.5h-5zM1244 270h12v1.5h-12zM1246 272h17v1.5h-17zM1242 274h1v1.5h-1zM1244 274h5v1.5h-5zM1244 276h5v1.5h-5zM1244 278h5v1.5h-5zM1242 280h1v1.5h-1zM1244 280h5v1.5h-5zM1244 282h5v1.5h-5zM1242 284h1v1.5h-1zM1244 284h5v1.5h-5zM1244 286h5v1.5h-5zM1242 288h1v1.5h-1zM1244 288h5v1.5h-5zM1244 290h5v1.5h-5zM1240 292h9v1.5h-9zM1242 294h1v1.5h-1zM1244 294h5v1.5h-5zM1244 296h12v1.5h-12zM1244 298h4v1.5h-4zM1242 300h1v1.5h-1zM1244 300h5v1.5h-5zM1244 302h5v1.5h-5zM1244 304h4v1.5h-4zM1242 306h1v1.5h-1zM1244 306h5v1.5h-5zM1244 308h12v1.5h-12zM1244 310h4v1.5h-4zM1242 312h1v1.5h-1zM1244 312h5v1.5h-5zM1244 314h12v1.5h-12zM1244 316h4v1.5h-4zM1236 320h8v1.5h-8zM1238 322h1v1.5h-1zM1240 322h5v1.5h-5zM1240 324h12v1.5h-12zM1240 326h5v1.5h-5zM1240 328h6v1.5h-6zM1240 330h12v1.5h-12zM1242 332h8v1.5h-8zM1238 334h1v1.5h-1zM1240 334h5v1.5h-5zM1240 336h12v1.5h-12zM1240 338h5v1.5h-5zM1240 340h6v1.5h-6zM1240 342h12v1.5h-12zM1242 344h8v1.5h-8zM1240 346h7v1.5h-7zM1238 350h1v1.5h-1zM1240 350h5v1.5h-5zM1240 352h12v1.5h-12zM1240 354h5v1.5h-5zM1240 356h6v1.5h-6zM1240 358h12v1.5h-12zM1242 360h8v1.5h-8zM1240 362h7v1.5h-7zM1238 366h1v1.5h-1zM1240 366h5v1.5h-5zM1240 368h12v1.5h-12zM1240 370h6v1.5h-6zM1240 372h5v1.5h-5zM1240 374h12v1.5h-12zM1242 376h8v1.5h-8zM1238 378h1v1.5h-1zM1240 378h5v1.5h-5zM1240 380h12v1.5h-12zM1240 382h6v1.5h-6zM1240 384h5v1.5h-5zM1240 386h12v1.5h-12zM1242 388h8v1.5h-8zM1240 390h7v1.5h-7zM1238 394h1v1.5h-1zM1240 394h5v1.5h-5zM1240 396h12v1.5h-12zM1240 398h6v1.5h-6zM1240 400h5v1.5h-5zM1240 402h12v1.5h-12zM1242 404h8v1.5h-8zM1240 406h7v1.5h-7zM1236 412h14v1.5h-14zM1238 414h1v1.5h-1zM1240 414h5v1.5h-5zM1240 416h13v1.5h-13zM1242 418h8v1.5h-8zM1242 430h9v1.5h-9zM1240 434h8v1.5h-8zM1242 436h1v1.5h-1zM1244 436h5v1.5h-5zM1244 438h7v1.5h-7zM1246 440h10v1.5h-10z"/>
<path fill="#0a4ea3" opacity="0.24" d="M1246 76h6v1.5h-6zM1253 78h5v1.5h-5zM1259 78h8v1.5h-8zM1268 78h4v1.5h-4zM1273 78h5v1.5h-5zM1279 78h8v1.5h-8zM1288 78h3v1.5h-3zM1292 78h7v1.5h-7zM1300 78h3v1.5h-3zM1304 78h4v1.5h-4zM1309 78h5v1.5h-5zM1315 78h10v1.5h-10zM1326 78h2v1.5h-2zM1329 78h4v1.5h-4zM1334 78h1v1.5h-1zM1336 78h10v1.5h-10zM1347 78h1v1.5h-1zM1241 80h3v1.5h-3zM1245 80h1v1.5h-1zM1247 80h4v1.5h-4zM1252 80h3v1.5h-3zM1256 80h5v1.5h-5zM1262 80h4v1.5h-4zM1267 80h10v1.5h-10zM1278 80h3v1.5h-3zM1282 80h3v1.5h-3zM1286 80h3v1.5h-3zM1290 80h6v1.5h-6zM1244 84h29v1.5h-29zM1258 86h21v1.5h-21zM1280 86h1v1.5h-1zM1282 86h9v1.5h-9zM1244 88h29v1.5h-29zM1258 90h12v1.5h-12zM1271 90h1v1.5h-1zM1273 90h8v1.5h-8zM1282 90h1v1.5h-1zM1284 90h9v1.5h-9zM1250 94h8v1.5h-8zM1257 96h3v1.5h-3zM1261 96h6v1.5h-6zM1268 96h3v1.5h-3zM1272 96h2v1.5h-2zM1275 96h3v1.5h-3zM1279 96h6v1.5h-6zM1286 96h5v1.5h-5zM1248 100h8v1.5h-8zM1248 102h6v1.5h-6zM1250 104h11v1.5h-11zM1257 106h3v1.5h-3zM1261 106h7v1.5h-7zM1269 106h3v1.5h-3zM1273 106h8v1.5h-8zM1282 106h2v1.5h-2zM1285 106h3v1.5h-3zM1289 106h8v1.5h-8zM1298 106h3v1.5h-3zM1302 106h6v1.5h-6zM1309 106h3v1.5h-3zM1313 106h6v1.5h-6zM1254 112h20v1.5h-20zM1257 114h11v1.5h-11zM1250 116h11v1.5h-11zM1257 118h3v1.5h-3zM1261 118h5v1.5h-5zM1267 118h6v1.5h-6zM1274 118h2v1.5h-2zM1277 118h3v1.5h-3zM1281 118h5v1.5h-5zM1287 118h2v1.5h-2zM1290 118h3v1.5h-3zM1294 118h9v1.5h-9zM1304 118h4v1.5h-4zM1250 120h10v1.5h-10zM1257 122h3v1.5h-3zM1261 122h9v1.5h-9zM1271 122h3v1.5h-3zM1275 122h5v1.5h-5zM1281 122h3v1.5h-3zM1285 122h6v1.5h-6zM1292 122h3v1.5h-3zM1250 124h10v1.5h-10zM1257 126h3v1.5h-3zM1261 126h3v1.5h-3zM1265 126h2v1.5h-2zM1268 126h6v1.5h-6zM1275 126h8v1.5h-8zM1284 126h2v1.5h-2zM1287 126h7v1.5h-7zM1295 126h3v1.5h-3zM1299 126h6v1.5h-6zM1250 128h13v1.5h-13zM1257 130h1v1.5h-1zM1259 130h7v1.5h-7zM1267 130h10v1.5h-10zM1278 130h2v1.5h-2zM1281 130h4v1.5h-4zM1286 130h5v1.5h-5zM1292 130h8v1.5h-8zM1301 130h3v1.5h-3zM1305 130h4v1.5h-4zM1310 130h6v1.5h-6zM1250 132h14v1.5h-14zM1257 134h1v1.5h-1zM1259 134h7v1.5h-7zM1267 134h10v1.5h-10zM1278 134h2v1.5h-2zM1281 134h4v1.5h-4zM1286 134h5v1.5h-5zM1292 134h8v1.5h-8zM1301 134h3v1.5h-3zM1305 134h5v1.5h-5zM1311 134h6v1.5h-6zM1246 140h43v1.5h-43zM1253 142h5v1.5h-5zM1259 142h4v1.5h-4zM1264 142h3v1.5h-3zM1268 142h6v1.5h-6zM1275 142h2v1.5h-2zM1278 142h6v1.5h-6zM1285 142h3v1.5h-3zM1289 142h4v1.5h-4zM1294 142h6v1.5h-6zM1301 142h7v1.5h-7zM1309 142h2v1.5h-2zM1312 142h8v1.5h-8zM1321 142h10v1.5h-10zM1247 144h6v1.5h-6zM1251 148h18v1.5h-18zM1260 154h2v1.5h-2zM1265 156h2v1.5h-2zM1265 158h6v1.5h-6zM1264 160h5v1.5h-5zM1260 166h2v1.5h-2zM1265 168h2v1.5h-2zM1265 170h5v1.5h-5zM1264 172h6v1.5h-6zM1260 178h2v1.5h-2zM1265 180h2v1.5h-2zM1265 182h6v1.5h-6zM1264 184h5v1.5h-5zM1251 188h17v1.5h-17zM1250 192h9v1.5h-9zM1260 192h1v1.5h-1zM1250 194h9v1.5h-9zM1260 194h1v1.5h-1zM1258 202h2v1.5h-2zM1266 204h2v1.5h-2zM1267 206h2v1.5h-2zM1264 208h5v1.5h-5zM1263 210h5v1.5h-5zM1258 216h2v1.5h-2zM1266 218h2v1.5h-2zM1267 220h2v1.5h-2zM1264 222h6v1.5h-6zM1263 224h5v1.5h-5zM1246 232h6v1.5h-6zM1262 236h10v1.5h-10zM1242 240h5v1.5h-5zM1248 240h4v1.5h-4zM1253 240h6v1.5h-6zM1260 240h4v1.5h-4zM1265 240h5v1.5h-5zM1271 240h2v1.5h-2zM1274 240h2v1.5h-2zM1277 240h3v1.5h-3zM1281 240h5v1.5h-5zM1287 240h5v1.5h-5zM1293 240h4v1.5h-4zM1298 240h3v1.5h-3zM1302 240h3v1.5h-3zM1306 240h3v1.5h-3zM1310 240h6v1.5h-6zM1247 242h13v1.5h-13zM1250 246h8v1.5h-8zM1250 248h7v1.5h-7zM1250 250h8v1.5h-8zM1250 252h7v1.5h-7zM1250 254h11v1.5h-11zM1250 256h8v1.5h-8zM1250 258h7v1.5h-7zM1250 260h11v1.5h-11zM1250 264h10v1.5h-10zM1250 266h10v1.5h-10zM1250 268h4v1.5h-4zM1264 272h3v1.5h-3zM1250 274h15v1.5h-15zM1250 276h11v1.5h-11zM1250 278h11v1.5h-11zM1250 280h13v1.5h-13zM1250 282h11v1.5h-11zM1250 284h14v1.5h-14zM1250 286h11v1.5h-11zM1250 288h21v1.5h-21zM1250 290h11v1.5h-11zM1250 294h11v1.5h-11zM1257 296h3v1.5h-3zM1261 296h5v1.5h-5zM1267 296h6v1.5h-6zM1274 296h3v1.5h-3zM1278 296h4v1.5h-4zM1283 296h5v1.5h-5zM1289 296h9v1.5h-9zM1299 296h6v1.5h-6zM1249 298h3v1.5h-3zM1250 300h11v1.5h-11zM1250 302h1v1.5h-1zM1249 304h3v1.5h-3zM1250 306h8v1.5h-8zM1257 308h3v1.5h-3zM1261 308h5v1.5h-5zM1267 308h3v1.5h-3zM1271 308h4v1.5h-4zM1276 308h2v1.5h-2zM1279 308h4v1.5h-4zM1284 308h6v1.5h-6zM1249 310h3v1.5h-3zM1250 312h10v1.5h-10zM1257 314h3v1.5h-3zM1261 314h4v1.5h-4zM1266 314h3v1.5h-3zM1270 314h4v1.5h-4zM1275 314h5v1.5h-5zM1281 314h5v1.5h-5zM1287 314h4v1.5h-4zM1292 314h2v1.5h-2zM1295 314h10v1.5h-10zM1306 314h2v1.5h-2zM1309 314h1v1.5h-1zM1311 314h3v1.5h-3zM1315 314h2v1.5h-2zM1318 314h3v1.5h-3zM1322 314h6v1.5h-6zM1329 314h4v1.5h-4zM1334 314h3v1.5h-3zM1338 314h4v1.5h-4zM1343 314h5v1.5h-5zM1249 316h3v1.5h-3zM1246 322h11v1.5h-11zM1253 324h3v1.5h-3zM1257 324h2v1.5h-2zM1260 324h5v1.5h-5zM1266 324h5v1.5h-5zM1272 324h8v1.5h-8zM1281 324h8v1.5h-8zM1290 324h3v1.5h-3zM1294 324h1v1.5h-1zM1296 324h8v1.5h-8zM1246 326h6v1.5h-6zM1247 328h5v1.5h-5zM1253 328h5v1.5h-5zM1251 332h11v1.5h-11zM1246 334h12v1.5h-12zM1253 336h3v1.5h-3zM1257 336h8v1.5h-8zM1266 336h2v1.5h-2zM1269 336h3v1.5h-3zM1273 336h9v1.5h-9zM1246 338h6v1.5h-6zM1247 340h3v1.5h-3zM1251 340h9v1.5h-9zM1251 344h21v1.5h-21zM1242 348h2v1.5h-2zM1245 348h36v1.5h-36zM1282 348h2v1.5h-2zM1286 348h1v1.5h-1zM1288 348h5v1.5h-5zM1246 350h11v1.5h-11zM1253 352h6v1.5h-6zM1260 352h2v1.5h-2zM1263 352h6v1.5h-6zM1270 352h4v1.5h-4zM1275 352h5v1.5h-5zM1281 352h5v1.5h-5zM1287 352h4v1.5h-4zM1292 352h4v1.5h-4zM1246 354h6v1.5h-6zM1247 356h6v1.5h-6zM1254 356h7v1.5h-7zM1251 360h11v1.5h-11zM1242 364h2v1.5h-2zM1245 364h38v1.5h-38zM1284 364h2v1.5h-2zM1287 364h2v1.5h-2zM1290 364h2v1.5h-2zM1246 366h6v1.5h-6zM1253 368h5v1.5h-5zM1259 368h2v1.5h-2zM1262 368h7v1.5h-7zM1247 370h6v1.5h-6zM1246 372h6v1.5h-6zM1251 376h11v1.5h-11zM1246 378h11v1.5h-11zM1253 380h5v1.5h-5zM1259 380h2v1.5h-2zM1262 380h6v1.5h-6zM1269 380h4v1.5h-4zM1274 380h7v1.5h-7zM1282 380h4v1.5h-4zM1287 380h5v1.5h-5zM1293 380h5v1.5h-5zM1247 382h4v1.5h-4zM1252 382h6v1.5h-6zM1246 384h6v1.5h-6zM1251 388h11v1.5h-11zM1242 392h2v1.5h-2zM1245 392h36v1.5h-36zM1282 392h2v1.5h-2zM1285 392h1v1.5h-1zM1287 392h4v1.5h-4zM1246 394h12v1.5h-12zM1253 396h5v1.5h-5zM1259 396h2v1.5h-2zM1262 396h6v1.5h-6zM1269 396h4v1.5h-4zM1274 396h7v1.5h-7zM1282 396h5v1.5h-5zM1288 396h5v1.5h-5zM1294 396h5v1.5h-5zM1247 398h5v1.5h-5zM1253 398h6v1.5h-6zM1246 400h6v1.5h-6zM1251 404h11v1.5h-11zM1242 408h2v1.5h-2zM1245 408h37v1.5h-37zM1283 408h2v1.5h-2zM1286 408h1v1.5h-1zM1288 408h4v1.5h-4zM1246 414h13v1.5h-13zM1246 420h6v1.5h-6zM1246 422h12v1.5h-12zM1246 424h11v1.5h-11zM1246 426h11v1.5h-11zM1246 428h12v1.5h-12zM1246 432h28v1.5h-28zM1275 432h6v1.5h-6zM1250 436h13v1.5h-13zM1257 440h5v1.5h-5z"/>
<path fill="#333" opacity="0.2" d="M1242 84h1v1.5h-1zM1242 88h1v1.5h-1zM1246 100h1v1.5h-1zM1246 102h1v1.5h-1zM1246 152h1v1.5h-1zM1248 152h1v1.5h-1zM1248 162h1v1.5h-1zM1246 164h1v1.5h-1zM1248 164h1v1.5h-1zM1248 174h1v1.5h-1zM1246 176h1v1.5h-1zM1248 176h1v1.5h-1zM1248 186h1v1.5h-1zM1246 192h1v1.5h-1zM1248 192h1v1.5h-1zM1262 192h1v1.5h-1zM1246 194h1v1.5h-1zM1248 194h1v1.5h-1zM1262 194h1v1.5h-1zM1244 200h1v1.5h-1zM1246 200h1v1.5h-1zM1246 212h1v1.5h-1zM1244 214h1v1.5h-1zM1246 214h1v1.5h-1zM1246 226h1v1.5h-1zM1253 238h1v1.5h-1zM1248 346h1v1.5h-1zM1248 362h1v1.5h-1zM1248 390h1v1.5h-1zM1248 406h1v1.5h-1zM1244 420h1v1.5h-1zM1244 422h1v1.5h-1zM1244 424h1v1.5h-1zM1244 426h1v1.5h-1zM1244 428h1v1.5h-1zM1244 432h1v1.5h-1z"/>
</svg>
<div class="abs" style="left:1348px;top:73px;width:7px;height:615px;background:#fff;border-left:1px solid #ececec"></div>
<div class="abs" style="left:1349px;top:74px;width:6px;height:96px;background:#c8c8c8"></div>
<div class="abs" style="left:1349px;top:113px;width:6px;height:4px;background:#9a9a9a"></div>
<div class="abs" style="left:1349px;top:128px;width:6px;height:2px;background:#555"></div>
<div class="abs" style="left:1349px;top:333px;width:6px;height:4px;background:#b0b0b0"></div>
<div class="abs" style="left:271px;top:688px;width:1084px;height:48px;background:#fff;border-top:1px solid #dde0e5;border-bottom:1px solid #dde0e5"></div>
<div class="abs" style="left:283.3px;top:696px;width:59.5px;height:31.5px;border:1px solid #59616b;border-radius:6px;background:#fff"></div>
<div class="t" style="left:292px;top:705.5px;font-size:13px;color:#1f2530">Format</div>
<div class="vline" style="left:355px;top:689px;height:47px"></div>
<div class="t" style="left:389px;top:705.5px;font-size:13px;color:#1f2530">Code quality</div>
<div class="t" style="left:494.7px;top:705.5px;font-size:12.6px;color:#1f2530">Lineage</div>
<div class="abs" style="left:478px;top:733.5px;width:77.6px;height:2.3px;background:#7d8590"></div>
<div class="abs" style="left:271px;top:737px;width:1084px;height:248px;background-color:#f5f6f8;background-image:radial-gradient(circle,#e9ebee 0.6px,transparent 0.9px);background-size:4.3px 4.3px"></div>
<svg class="abs" style="left:0;top:0" width="1355" height="989"><path d="M580.2 916.55C591.75 916.55 591.75 916.55 603.3 916.55" stroke="#a3a8ae" stroke-width="1" fill="none" opacity="1"/><path d="M651.5 890.2C665.55 890.2 665.55 952.45 679.6 952.45" stroke="#a3a8ae" stroke-width="1" fill="none" opacity="1"/><path d="M643.5 916.55C706.85 916.55 706.85 915.75 770.2 915.75" stroke="#a3a8ae" stroke-width="1" fill="none" opacity="1"/><path d="M643.5 916.55C661.55 916.55 661.55 952.45 679.6 952.45" stroke="#a3a8ae" stroke-width="1" fill="none" opacity="1"/><path d="M646.5 943.3499999999999C663.05 943.3499999999999 663.05 952.45 679.6 952.45" stroke="#a3a8ae" stroke-width="1" fill="none" opacity="1"/><path d="M645.5 969.45C662.55 969.45 662.55 952.45 679.6 952.45" stroke="#a3a8ae" stroke-width="1" fill="none" opacity="1"/><path d="M721.5 952.45C745.85 952.45 745.85 915.75 770.2 915.75" stroke="#a3a8ae" stroke-width="1" fill="none" opacity="1"/><path d="M810.3 915.75C842.3499999999999 915.75 842.3499999999999 845.6 874.4 845.6" stroke="#a3a8ae" stroke-width="1" fill="none" opacity="1"/><path d="M810.3 915.75C842.3499999999999 915.75 842.3499999999999 949.05 874.4 949.05" stroke="#a3a8ae" stroke-width="1" fill="none" opacity="1"/><path d="M908.4 845.6C939.8499999999999 845.6 939.8499999999999 751.5999999999999 971.3 751.5999999999999" stroke="#a3a8ae" stroke-width="1" fill="none" opacity="1"/><path d="M908.4 845.6C939.8499999999999 845.6 939.8499999999999 779.35 971.3 779.35" stroke="#a3a8ae" stroke-width="1" fill="none" opacity="1"/><path d="M908.4 845.6C939.8499999999999 845.6 939.8499999999999 805.7 971.3 805.7" stroke="#a3a8ae" stroke-width="1" fill="none" opacity="1"/><path d="M908.4 845.6C939.8499999999999 845.6 939.8499999999999 832.2 971.3 832.2" stroke="#a3a8ae" stroke-width="1" fill="none" opacity="1"/><path d="M908.4 845.6C939.8499999999999 845.6 939.8499999999999 858.7 971.3 858.7" stroke="#a3a8ae" stroke-width="1" fill="none" opacity="1"/><path d="M908.4 845.6C939.8499999999999 845.6 939.8499999999999 885.4 971.3 885.4" stroke="#a3a8ae" stroke-width="1" fill="none" opacity="1"/><path d="M908.4 845.6C940.0999999999999 845.6 940.0999999999999 945.35 971.8 945.35" stroke="#a3a8ae" stroke-width="1" fill="none" opacity="1"/><path d="M1004.5 751.5999999999999C1027.45 751.5999999999999 1027.45 815.5 1050.4 815.5" stroke="#a3a8ae" stroke-width="1" fill="none" opacity="1"/><path d="M1030.7 779.35C1040.5500000000002 779.35 1040.5500000000002 815.5 1050.4 815.5" stroke="#a3a8ae" stroke-width="1" fill="none" opacity="1"/><path d="M1014.5 805.7C1032.45 805.7 1032.45 815.5 1050.4 815.5" stroke="#a3a8ae" stroke-width="1" fill="none" opacity="1"/><path d="M1012.4 832.2C1031.4 832.2 1031.4 815.5 1050.4 815.5" stroke="#a3a8ae" stroke-width="1" fill="none" opacity="1"/><path d="M1014 858.7C1032.2 858.7 1032.2 815.5 1050.4 815.5" stroke="#a3a8ae" stroke-width="1" fill="none" opacity="1"/><path d="M1015.3 885.4C1032.85 885.4 1032.85 815.5 1050.4 815.5" stroke="#a3a8ae" stroke-width="1" fill="none" opacity="1"/><path d="M1011.1 945.35C1030.85 945.35 1030.85 945.35 1050.6 945.35" stroke="#a3a8ae" stroke-width="1" fill="none" opacity="1"/><path d="M736.6 866.3499999999999C753.4000000000001 866.3499999999999 753.4000000000001 866.3499999999999 770.2 866.3499999999999" stroke="#e3e6ea" stroke-width="1" fill="none" opacity="1"/><path d="M815.6 866.3499999999999C845.6500000000001 866.3499999999999 845.6500000000001 918.9 875.7 918.9" stroke="#e3e6ea" stroke-width="1" fill="none" opacity="1"/><path d="M721.5 952.45C745.85 952.45 745.85 956.6500000000001 770.2 956.6500000000001" stroke="#e3e6ea" stroke-width="1" fill="none" opacity="1"/><path d="M915 918.9C943.15 918.9 943.15 918.9 971.3 918.9" stroke="#e3e6ea" stroke-width="1" fill="none" opacity="1"/></svg>
<div class="node" style="left:530px;top:906.5px;width:50.2px;height:20.1px;background:#d5efec;border-color:#95a5a8;line-height:18.1px">ecom.…</div>
<div class="node" style="left:603.3px;top:880.2px;width:48.2px;height:20.0px;background:#dcf2fc;border-color:#909cab;line-height:18.0px">stg_o…</div>
<div class="node" style="left:603.3px;top:906.5px;width:40.2px;height:20.1px;background:#dcf2fc;border-color:#909cab;line-height:18.1px">stg_…</div>
<div class="node" style="left:603.3px;top:933.3px;width:43.2px;height:20.1px;background:#dcf2fc;border-color:#909cab;line-height:18.1px">stg_…</div>
<div class="node" style="left:603.3px;top:959.4px;width:42.2px;height:20.1px;background:#dcf2fc;border-color:#909cab;line-height:18.1px">stg_…</div>
<div class="node" style="left:679.6px;top:942.4px;width:41.9px;height:20.1px;background:#dcf2fc;border-color:#909cab;line-height:18.1px">orde…</div>
<div class="node" style="left:770.2px;top:905.7px;width:40.1px;height:20.1px;background:#dcf2fc;border-color:#909cab;line-height:18.1px">orders</div>
<div class="node fade" style="left:679.6px;top:856.3px;width:57.0px;height:20.1px;background:#eef3f5;border-color:#e3e8eb;line-height:18.1px">ecom.r…</div>
<div class="node fade" style="left:770.2px;top:856.3px;width:45.4px;height:20.1px;background:#eef4f7;border-color:#e3e8eb;line-height:18.1px">stg_c…</div>
<div class="node fade" style="left:770.2px;top:946.6px;width:75.3px;height:20.1px;background:#eef6f1;border-color:#e3ebe6;line-height:18.1px">test_supply…</div>
<div class="node dk" style="left:874.4px;top:834.7px;width:34.0px;height:21.8px;background:#ffc4cd;border-color:#33383e;line-height:19.8px">or…</div>
<div class="node dk" style="left:971.3px;top:741.8px;width:33.2px;height:19.6px;background:#fde9b8;border-color:#33383e;line-height:17.6px">or…</div>
<div class="node fade" style="left:971.3px;top:768.5px;width:59.4px;height:21.7px;background:#fdf6e2;border-color:#ece6d6;line-height:19.7px">ord…</div>
<div class="node dk" style="left:971.3px;top:795px;width:43.2px;height:21.4px;background:#fde9b8;border-color:#33383e;line-height:19.4px">larg…</div>
<div class="node dk" style="left:971.3px;top:821px;width:41.1px;height:22.4px;background:#fde9b8;border-color:#33383e;line-height:20.4px">ord…</div>
<div class="node dk" style="left:971.3px;top:847.8px;width:42.7px;height:21.8px;background:#fde9b8;border-color:#33383e;line-height:19.8px">food…</div>
<div class="node dk" style="left:971.3px;top:874.5px;width:44.0px;height:21.8px;background:#fde9b8;border-color:#33383e;line-height:19.8px">drin…</div>
<div class="node dk" style="left:1050.4px;top:804.6px;width:46.1px;height:21.8px;background:#dedcdc;border-color:#33383e;line-height:19.8px">orde…</div>
<div class="node fade" style="left:875.7px;top:908.8px;width:39.3px;height:20.2px;background:#eef4f8;border-color:#e5ebef;line-height:18.2px">cust…</div>
<div class="node fade" style="left:971.3px;top:908.8px;width:39.3px;height:20.2px;background:#f8eef0;border-color:#efe4e7;line-height:18.2px">cus…</div>
<div class="node dk" style="left:874.4px;top:938.2px;width:87.7px;height:21.7px;background:#c8f5dc;border-color:#33383e;line-height:19.7px">test_order_it…</div>
<div class="node" style="left:971.8px;top:935.5px;width:39.3px;height:19.7px;background:#fde9b8;border-color:#e0d3a8;line-height:17.7px">ord…</div>
<div class="node" style="left:1050.6px;top:935.5px;width:52.4px;height:19.7px;background:#fde9b8;border-color:#e0d3a8;line-height:17.7px">order_…</div>
<div class="abs" style="left:937.5px;top:761px;width:296px;height:39.5px;background:#fff;border:1px solid #7d858f;border-radius:6px;overflow:hidden"><div style="position:absolute;left:190.5px;top:0;width:104px;height:100%;background:#f0f1f4;border-left:1px solid #7d858f"></div></div>
<div class="abs" style="left:971.3px;top:768.5px;width:59.4px;height:22px;border:1px solid #f3efe4;border-radius:2px;background:rgba(253,246,226,.3)"></div>
<div class="abs" style="left:949.5px;top:772.5px;width:167.5px;overflow:hidden;white-space:nowrap;font-size:13.6px;color:#1f2530;line-height:1.15">2+models/marts/orders.yml+</div>
<div class="t" style="left:1141px;top:774.5px;font-size:12.8px;color:#1f2530">Update Graph</div>
<div class="abs" style="left:1250px;top:761px;width:40px;height:39.5px;background:#fff;border:1px solid #7d858f;border-radius:6px"></div>
<svg class="abs" style="left:1262px;top:773px" width="17" height="16" viewBox="0 0 17 16" fill="none" stroke="#2d3540" stroke-width="1.3"><path d="M0.8 5V0.8H4.5M12.5 0.8H16.2V5M16.2 11V15.2H12.5M4.5 15.2H0.8V11"/></svg>
<div class="abs" style="left:1298px;top:761px;width:40px;height:39.5px;background:#fff;border:1px solid #7d858f;border-radius:6px"></div>
<svg class="abs" style="left:1310px;top:773px" width="16" height="16" viewBox="0 0 16 16" fill="none" stroke="#2d3540" stroke-width="1.3"><path d="M14 9A6 6 0 1 1 11.5 3.2"/><path d="M9 0.8L12 3.3L9.3 6"/></svg>
<div class="abs" style="left:517px;top:74px;width:600px;height:263.5px;background:#f0f0f0;border-radius:7px;box-shadow:0 3px 9px rgba(0,0,0,.2)"></div>
<div class="abs" style="left:523px;top:82.5px;width:588px;height:25px;background:#fff;border:1.3px solid #2b5fd9"></div>
<div class="t" style="left:530px;top:88.5px;font-size:13px;color:#333">&gt;</div>
<div class="abs" style="left:538px;top:87.5px;width:1px;height:15px;background:#222"></div>
<div class="abs" style="left:522px;top:112px;width:590px;height:22px;background:#0a56b4;border-radius:3px"></div>
<div class="pi" style="left:533.5px;top:113px;color:#fff">Add Cursor Above</div>
<div class="pi" style="left:533.5px;top:135px;color:#4d4d4d">Add Cursor Below</div>
<div class="pi" style="left:533.5px;top:157px;color:#4d4d4d">Add Cursors To Bottom</div>
<div class="pi" style="left:533.5px;top:179px;color:#4d4d4d">Add Cursors to Line Ends</div>
<div class="pi" style="left:533.5px;top:201px;color:#4d4d4d">Add Cursors To Top</div>
<div class="pi" style="left:533.5px;top:223px;color:#4d4d4d">Add Line Comment</div>
<div class="pi" style="left:533.5px;top:245px;color:#4d4d4d">Add Selection To Next Find Match</div>
<div class="pi" style="left:533.5px;top:267px;color:#4d4d4d">Add Selection To Previous Find Match</div>
<div class="pi" style="left:533.5px;top:289px;color:#4d4d4d">Build all models related to the modified models</div>
<div class="pi" style="left:533.5px;top:311px;color:#4d4d4d">Build all modified and downstream models</div>
<div class="kb kbs" style="left:1020.3px;top:114.3px;width:22.3px">⌥</div>
<div class="kb kbs" style="left:1047.3px;top:114.3px;width:21.3px">⌘</div>
<div class="kb kbs" style="left:1073.3px;top:114.3px;width:20.5px"><svg width="20" height="15" viewBox="0 0 20 15" style="position:absolute;left:0;top:0" fill="none" stroke="currentColor" stroke-width="1.3"><path d="M10 3.5V12.5M6.5 7L10 3.5L13.5 7"/></svg></div>
<div class="kb" style="left:1020.3px;top:136.3px;width:22.3px">⌥</div>
<div class="kb" style="left:1047.3px;top:136.3px;width:21.3px">⌘</div>
<div class="kb" style="left:1073.3px;top:136.3px;width:20.5px"><svg width="20" height="15" viewBox="0 0 20 15" style="position:absolute;left:0;top:0" fill="none" stroke="currentColor" stroke-width="1.3"><path d="M10 2.5V11.5M6.5 8L10 11.5L13.5 8"/></svg></div>
<div class="kb" style="left:1025.6px;top:180.3px;width:21.7px"><svg width="21" height="15" viewBox="0 0 21 15" style="position:absolute;left:0;top:0" fill="none" stroke="currentColor" stroke-width="1.1" stroke-linejoin="round"><path d="M10.5 3L5.8 7.8H8.3V11.5H12.7V7.8H15.2Z"/></svg></div>
<div class="kb" style="left:1052.2px;top:180.3px;width:22.0px">⌥</div>
<div class="kb" style="left:1079.2px;top:180.3px;width:14.6px">I</div>
<div class="kb" style="left:992.4px;top:224.3px;width:22.0px">⌘</div>
<div class="kb" style="left:1019px;top:224.3px;width:18.3px">K</div>
<div class="kb" style="left:1048.2px;top:224.3px;width:21.4px">⌘</div>
<div class="kb" style="left:1074.2px;top:224.3px;width:19.6px">C</div>
<div class="kb" style="left:1048.2px;top:246.3px;width:21.4px">⌘</div>
<div class="kb" style="left:1074.2px;top:246.3px;width:19.6px">D</div>
</body></html>
